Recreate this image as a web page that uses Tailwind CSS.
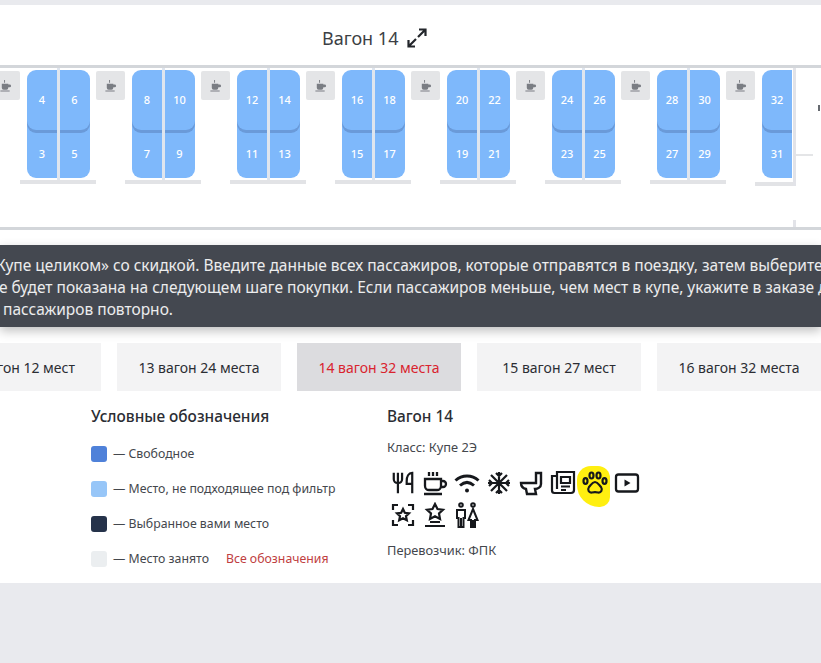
<!DOCTYPE html>
<html lang="ru">

<head>
    <meta charset="UTF-8">
    <title>Вагон 14</title>
    <script src="https://cdn.jsdelivr.net/npm/@tailwindcss/browser@4"></script>
</head>

<body class="bg-[#e9eaee] font-['Noto_Sans',sans-serif] text-[#2b2d33] overflow-hidden h-[663px]">
    <div class="mt-[5px] bg-white h-[578px] overflow-hidden">
        <!-- схема вагона -->
        <div class="flex items-center h-[60px] pl-[322px] pt-[6px]">
            <span class="text-[18px] text-[#3c3f45]">Вагон 14</span>
            <svg class="ml-[9px] w-[20px] h-[20px]" viewBox="0 0 20 20" fill="none" stroke="#23262b" stroke-width="2.2">
                <path d="M11 9l7-7M12 1.500h6.500V8M9 11l-7 7M1.500 12v6.500H8" />
            </svg>
        </div>
        <div class="border-y-[3px] border-[#d3d6da] h-[165px] overflow-hidden">
            <div id="wagon" class="flex ml-[-9px] w-[840px]"></div>
        </div>

        <!-- сообщение -->
        <div class="mt-[15px] h-[82px] bg-[#444850] text-white/90 text-[15.5px] leading-[22px] pt-[9px] whitespace-nowrap overflow-hidden shadow-[0_4px_10px_rgba(0,0,0,0.25)]">
            <div class="ml-[-12px]">«Купе целиком» со скидкой. Введите данные всех пассажиров, которые отправятся в поездку, затем выберите</div>
            <div class="ml-[-1px]">е будет показана на следующем шаге покупки. Если пассажиров меньше, чем мест в купе, укажите в заказе д</div>
            <div class="ml-[3px]">пассажиров повторно.</div>
        </div>

        <!-- вагоны -->
        <div class="flex gap-4 mt-[16px] ml-[-47px] w-[900px] text-[14px]">
            <div class="w-[148px] h-[48px] shrink-0 flex items-center justify-end pr-[26px] bg-[#f3f3f4] whitespace-nowrap">вагон 12 мест</div>
            <div class="w-[164px] h-[48px] shrink-0 flex items-center justify-center bg-[#f3f3f4]">13 вагон 24 места</div>
            <div class="w-[164px] h-[48px] shrink-0 flex items-center justify-center bg-[#dcdcdf] text-[#d9232e]">14 вагон 32 места</div>
            <div class="w-[164px] h-[48px] shrink-0 flex items-center justify-center bg-[#f3f3f4]">15 вагон 27 мест</div>
            <div class="w-[164px] h-[48px] shrink-0 flex items-center justify-center bg-[#f3f3f4]">16 вагон 32 места</div>
        </div>

        <div class="flex mt-[15px] pl-[91px]">
            <!-- условные обозначения -->
            <div class="w-[296px]">
                <h3 class="text-[15.4px] font-medium leading-[22px]">Условные обозначения</h3>
                <div class="mt-[18px] flex flex-col gap-[19px] text-[12.3px] leading-[16px] text-[#44474d]">
                    <div class="flex items-center gap-[6px]"><span class="w-[16px] h-[16px] rounded-[3px] bg-[#4f81d9]"></span>— Свободное</div>
                    <div class="flex items-center gap-[6px]"><span class="w-[16px] h-[16px] rounded-[3px] bg-[#97c6f8]"></span>— Место, не подходящее под фильтр</div>
                    <div class="flex items-center gap-[6px]"><span class="w-[16px] h-[16px] rounded-[3px] bg-[#25324a]"></span>— Выбранное вами место</div>
                    <div class="flex items-center gap-[6px]"><span class="w-[16px] h-[16px] rounded-[3px] bg-[#ebeef0]"></span>— Место занято<span class="ml-[11px] text-[#c0403f]">Все обозначения</span></div>
                </div>
            </div>

            <!-- информация о вагоне -->
            <div>
                <h3 class="text-[15.4px] font-medium leading-[22px]">Вагон 14</h3>
                <p class="mt-[11px] text-[12.8px] leading-[16px] text-[#44474d]">Класс: Купе 2Э</p>
                <div class="mt-[12px] flex flex-wrap w-[260px]">
                    <div class="w-[32px] h-[32px] flex items-center justify-center">
                        <svg class="w-[24px] h-[26px]" viewBox="0 0 26 26" fill="none" stroke="#16181c" stroke-width="2.400">
                            <path d="M3 2v7a4 4 0 0 0 4 4h1a4 4 0 0 0 4-4V2M7.500 2v22M23 24V2c-4 0-6 4-6 9v3h6" />
                        </svg>
                    </div>
                    <div class="w-[32px] h-[32px] flex items-center justify-center">
                        <svg class="w-[26px] h-[26px]" viewBox="0 0 26 26" fill="none" stroke="#16181c" stroke-width="2.300">
                            <path d="M7 2v4M11 2v4M15 2v4M3 9h16v7a4 4 0 0 1-4 4H7a4 4 0 0 1-4-4zM19 11h2a3 3 0 0 1 0 6h-2M2 24h18" />
                        </svg>
                    </div>
                    <div class="w-[32px] h-[32px] flex items-center justify-center">
                        <svg class="w-[26px] h-[26px]" viewBox="0 0 26 26" fill="none" stroke="#16181c" stroke-width="3">
                            <path d="M1.500 10.500c6.500-6 16.500-6 23 0M6 15.500c4.500-4 9.500-4 14 0" />
                            <circle cx="13" cy="20.500" r="2" fill="#16181c" stroke="none" />
                        </svg>
                    </div>
                    <div class="w-[32px] h-[32px] flex items-center justify-center">
                        <svg class="w-[26px] h-[26px]" viewBox="0 0 26 26" fill="none" stroke="#16181c" stroke-width="2.200">
                            <path d="M13 2v22M2 13h22M5 5l16 16M21 5L5 21M10 3l3 3 3-3M10 23l3-3 3 3M3 10l3 3-3 3M23 10l-3 3 3 3" />
                        </svg>
                    </div>
                    <div class="w-[32px] h-[32px] flex items-center justify-center">
                        <svg class="w-[26px] h-[26px]" viewBox="0 0 26 26" fill="none" stroke="#16181c" stroke-width="2.400">
                            <path d="M18 13V3h5v11c0 3-3 5-6 5l1 5H9l-1-5c-2-.5-5-2-5-6zM3 13h15" />
                        </svg>
                    </div>
                    <div class="w-[32px] h-[32px] flex items-center justify-center">
                        <svg class="w-[26px] h-[26px]" viewBox="0 0 26 26" fill="none" stroke="#16181c" stroke-width="2.200">
                            <path d="M7 19V2h17v18a3 3 0 0 1-3 3H4.500A2.500 2.500 0 0 1 2 20.500V6h5M11 7h9v6h-9zM11 16.500h9M11 20h5" />
                        </svg>
                    </div>
                    <div class="relative w-[32px] h-[32px] flex items-center justify-center">
                        <span class="absolute left-[-2px] top-[-1px] w-[33px] h-[41px] bg-[#ffef10] rounded-[14px_12px_10px_22px]"></span>
                        <svg class="relative w-[26px] h-[26px]" viewBox="0 0 26 26" fill="none" stroke="#16181c" stroke-width="2.200">
                            <ellipse cx="9.500" cy="5.500" rx="2" ry="3" />
                            <ellipse cx="16.500" cy="5.500" rx="2" ry="3" />
                            <ellipse cx="3.500" cy="11" rx="2" ry="2.800" />
                            <ellipse cx="22.500" cy="11" rx="2" ry="2.800" />
                            <path d="M13 12c-3 0-4 3-6 5-2 3 0 6 3 5.500 2-.4 4-.4 6 0 3 .5 5-2.500 3-5.500-2-2-3-5-6-5z" />
                        </svg>
                    </div>
                    <div class="w-[32px] h-[32px] flex items-center justify-center">
                        <svg class="w-[26px] h-[26px]" viewBox="0 0 26 26" fill="none" stroke="#16181c" stroke-width="2.300">
                            <rect x="2" y="4.500" width="22" height="17" rx="2.500" />
                            <path d="M10.500 9.500l6 3.500-6 3.500z" fill="#16181c" stroke="none" />
                        </svg>
                    </div>
                    <div class="w-[32px] h-[32px] flex items-center justify-center">
                        <svg class="w-[26px] h-[26px]" viewBox="0 0 26 26" fill="none" stroke="#16181c" stroke-width="2.200">
                            <path d="M3 8V3h5M18 3h5v5M23 18v5h-5M8 23H3v-5" />
                            <path d="M13 7l1.800 3.800 4.200.500-3 2.900.8 4.100-3.800-2-3.800 2 .8-4.100-3-2.900 4.200-.500z" />
                        </svg>
                    </div>
                    <div class="w-[32px] h-[32px] flex items-center justify-center">
                        <svg class="w-[26px] h-[26px]" viewBox="0 0 26 26" fill="none" stroke="#16181c" stroke-width="2.200">
                            <path d="M13 2l2.500 5 5.500.700-4 3.800 1 5.500-5-2.700-5 2.700 1-5.500-4-3.800 5.500-.700zM8 20h10M3 24h20" />
                        </svg>
                    </div>
                    <div class="w-[32px] h-[32px] flex items-center justify-center">
                        <svg class="w-[26px] h-[26px]" viewBox="0 0 26 26" fill="none" stroke="#16181c" stroke-width="2">
                            <circle cx="7" cy="3" r="1.800" />
                            <circle cx="19" cy="3" r="1.800" />
                            <path d="M3 8h8v8H9.500v9h-5v-9H3zM7 16v9M19 7l4.500 11H21v7h-4v-7h-2.500zM19 18v7" />
                        </svg>
                    </div>
                </div>
                <p class="mt-[11px] text-[12.8px] leading-[16px] text-[#44474d]">Перевозчик: ФПК</p>
            </div>
        </div>
    </div>

    <script>
        const cup = `
            <div class="w-[29px] h-[29px] shrink-0 mt-[3px] bg-[#e4e5e7] rounded-[2px] flex items-center justify-center">
                <svg class="w-[13px] h-[13px]" viewBox="0 0 14 14" fill="#7a7d83">
                    <path d="M3 5h7v4.500a2 2 0 0 1-2 2H5a2 2 0 0 1-2-2zM10 6h1.500a1.500 1.500 0 0 1 0 3H10zM1.500 12.500h10v1h-10zM5.500 1h1v3h-1z"/>
                </svg>
            </div>`;

        const seat = (up, down, rounded) => {
            const upperCorners = rounded === 'left' ? 'rounded-l-[9px] pl-[1px]' : 'rounded-r-[9px]';
            const lowerCorners = rounded === 'left' ? 'rounded-bl-[9px] pl-[1px]' : 'rounded-br-[9px]';
            return `
            <div class="w-[30px] mt-[2px] h-[108px] flex flex-col text-white text-[11px] font-medium">
                <div class="relative h-[60px] pt-[22px] text-center bg-[#7eb8fb] ${upperCorners} shadow-[0_3px_0_#6a9ad9]">${up}</div>
                <div class="h-[60px] -mt-[12px] pt-[28px] text-center bg-[#7eb8fb] ${lowerCorners}">${down}</div>
            </div>`;
        };

        const compartment = (n) => `
            <div class="w-[76px] shrink-0">
                <div class="flex justify-center h-[112px]">
                    ${seat(n + 1, n, 'left')}
                    <div class="w-[3px] h-[112px] bg-[#dfe5ee]"></div>
                    ${seat(n + 3, n + 2, 'right')}
                </div>
                <div class="h-[4px] bg-[#e2e3e6]"></div>
            </div>`;

        let html = cup;
        for (let n = 3; n <= 27; n += 4) {
            html += compartment(n) + cup;
        }
        // последнее купе упирается в стенку
        html += `
            <div class="w-[38px] shrink-0">
                <div class="h-[112px] pl-[7px]">
                    <div class="w-[30px] mt-[2px] h-[108px] flex flex-col text-white text-[11px] font-medium">
                        <div class="relative h-[60px] pt-[22px] text-center bg-[#7eb8fb] rounded-l-[9px] shadow-[0_3px_0_#6a9ad9]">32</div>
                        <div class="h-[60px] -mt-[12px] pt-[28px] text-center bg-[#7eb8fb] rounded-bl-[9px]">31</div>
                    </div>
                </div>
                <div class="h-[4px] bg-[#e2e3e6]"></div>
            </div>
            <div class="w-[3px] shrink-0 h-[159px] flex flex-col">
                <div class="h-[118px] bg-[#e2e3e8]"></div>
                <div class="mt-[34px] h-[7px] bg-[#e2e3e8]"></div>
            </div>
            <div class="w-[17px] shrink-0 h-[2px] mt-[86px] bg-[#e4e5e7]"></div>
            <div class="ml-[5px] w-[2px] h-[6px] mt-[37px] bg-[#666a70]"></div>`;
        document.getElementById('wagon').innerHTML = html;
    </script>
</body>

</html>
